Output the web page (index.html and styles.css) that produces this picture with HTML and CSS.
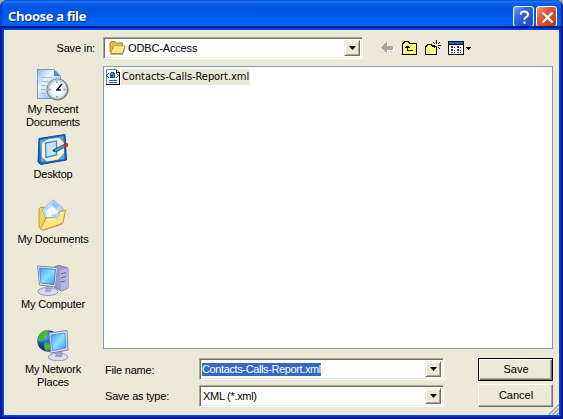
FILE: index.html
```html
<!DOCTYPE html>
<html lang="en">
<head>
<meta charset="utf-8">
<title>Choose a file</title>
<link rel="stylesheet" href="styles.css">
</head>
<body>
<div class="window">
  <header class="titlebar">
    <h1 class="title">Choose a file</h1>
    <button class="cap help" aria-label="Help"><svg width="21" height="21" viewBox="0 0 21 21"><path d="M6.8 7.8V6.6Q7.2 4.6 10.4 4.6Q14 4.6 14 7.4Q14 9 12.2 10Q10.5 11 10.5 12.8M10.5 14.6V16.8" fill="none" stroke="#fff" stroke-width="2"/></svg></button>
    <button class="cap close" aria-label="Close"><svg width="21" height="21" viewBox="0 0 21 21"><path d="M5.5 5.5L15.5 15.5M15.5 5.5L5.5 15.5" stroke="#fff" stroke-width="2.2"/></svg></button>
  </header>
  <main class="body">
    <div class="lookin">
      <span class="lookin-label">Save in:</span>
      <div class="combo">
        <svg class="folder" width="17" height="16" viewBox="0 0 17 16"><path d="M1 12V3L2.5 1.5H6L7.5 3H13.5V6" fill="#e8bd43" stroke="#ad8118"/><path d="M1.500 13.500L4.500 6H16L13.500 13.500Z" fill="#fbe58c" stroke="#b98d22"/><path d="M5 7H15" stroke="#fff8c8"/><path d="M2 14.500H13.500L16 8" stroke="#8b6f2e" fill="none" stroke-width=".6"/></svg>
        <span class="combo-text folder-name">ODBC-Access</span>
        <span class="drop"><svg width="7" height="4"><path d="M0 0H7L3.500 4Z"/></svg></span>
      </div>
      <div class="tools">
        <svg width="14" height="14" viewBox="0 0 14 14" shape-rendering="crispEdges"><path d="M2 7.500L7 2.500V5.500H14V9.500H7V12.500Z" fill="#fff"/><path d="M0 6.500L5.500 1V4.500H12V8.500H5.500V12Z" fill="#aca899"/></svg>
        <svg width="16" height="14" viewBox="0 0 16 14" shape-rendering="crispEdges"><path d="M.5 13.500V2.500H1.500V1.500H2.500V.5H6.500V1.500H7.500V2.500H14.500V13.500Z" fill="#ffff72" stroke="#000"/><path d="M5.500 5V9.500H11M3 6.500H8M4 5.500H7" stroke="#000" fill="none"/></svg>
        <svg width="16" height="16" viewBox="0 0 16 16" shape-rendering="crispEdges"><path d="M.5 14.500V6.500H1.500V5.500H2.500V4.500H6.500V5.500H7.500V6.500H11.500V14.500Z" fill="#ffff72" stroke="#000"/><path d="M11 0h1v4h-1zM11 7h1v3h-1zM7 5h3v1H7zM13 5h3v1h-3zM8 2h1v1H8zM9 3h1v1H9zM14 2h1v1h-1zM13 3h1v1h-1zM13 7h1v1h-1zM14 8h1v1h-1zM9 7h1v1H9z"/><path d="M11 5h1v1h-1z" fill="#fff"/></svg>
        <svg width="24" height="14" viewBox="0 0 24 14" shape-rendering="crispEdges"><path d="M.5.5H15.500V13.500H.5Z" fill="#fff" stroke="#000"/><path d="M1 1H15V3H1Z" fill="#1d62c8"/><path d="M0 3H16V4H0Z"/><path d="M3 5h2v2H3zM9 5h2v2H9zM3 8h2v2H3zM9 8h2v2H9zM3 11h2v1H3zM9 11h2v1H9z" fill="#2c319c"/><path d="M6 6h1v1H6zM12 6h1v1h-1zM6 9h1v1H6zM12 9h1v1h-1zM6 11h1v1H6zM12 11h1v1h-1z"/><path d="M18 6H23V7H22V8H21V9H20V8H19V7H18Z"/></svg>
      </div>
    </div>

    <nav class="places">
      <a class="place">
        <svg width="32" height="32" viewBox="0 0 32 32"><defs><linearGradient id="pg" x2="1" y2="1"><stop stop-color="#8db4ee"/><stop offset=".35" stop-color="#edf5ff"/><stop offset="1" stop-color="#72a0e5"/></linearGradient><radialGradient id="cl"><stop offset=".4" stop-color="#fff"/><stop offset="1" stop-color="#c7e5f4"/></radialGradient></defs><path d="M.5.5H17L23.500 7V29.500H.5Z" fill="url(#pg)" stroke="#7698d4"/><path d="M17 .5V7H23.500Z" fill="#5286d8"/><path d="M4 8.500H15M4 12.500H12M4 16.500H9M4 20.500H8M4 24.500H9" stroke="#9ab9e8"/><circle cx="20.500" cy="20.500" r="10" fill="url(#cl)" stroke="#7d8691" stroke-width="2.200"/><circle cx="20.200" cy="20.200" r="9.300" fill="none" stroke="#cbd1d8" stroke-width="1.200"/><path d="M20 12.500V14M20 27V28.500M12 20.500H14M26.500 20.500H28.500" stroke="#e97435" stroke-width="1.600"/><path d="M19 21H24M20 21L25 15" stroke="#172335" stroke-width="1.700"/></svg>
        <span>My Recent<br>Documents</span>
      </a>
      <a class="place">
        <svg width="32" height="32" viewBox="0 0 32 32"><path d="M2 4.500L28 .5L29.500 26L3.500 30.500L1 28Z" fill="#2166bd" stroke="#114b98"/><path d="M3 6L26.500 2L27.500 25L4 28Z" fill="#5da1e5"/><path d="M5 9L12 5L22 4L27 9V19L21 25.500L10 27.500L5 23Z" fill="#fff1c2"/><path d="M8.500 9L19.500 7V21L9 23.500Z" fill="#c6e6ff" stroke="#3d8ae0" stroke-width="1.400"/><path d="M16 16L27 10.500L29 12.500L19 18Z" fill="#4b9ae0" stroke="#104785" stroke-width=".8"/><circle cx="29" cy="11" r="2.200" fill="#c62d23"/><path d="M15 17L18 15.500L18 18Z" fill="#263b54"/></svg>
        <span>Desktop</span>
      </a>
      <a class="place docs">
        <svg width="32" height="32" viewBox="0 0 32 32"><path d="M2 28V10L4 8L9 9L12 14L25 15V25L7 31Z" fill="#f4d05c" stroke="#c6972b"/><path d="M5 11L16 .8L26 9L24 24L11 24Z" fill="#b7dcff" stroke="#87b8e7"/><path d="M14 5L17 2.500L22 7L19 10Z" fill="#8fc4f8"/><path d="M9 12L15 7L23 14V21L11 23Z" fill="#f2f9ff"/><path d="M3.500 30L9 19L19 18L22 13L28.500 11L26 24L21 26L6 31Z" fill="#ffe884" stroke="#c5952b"/><path d="M10 21L20 19.500L23 15L26 14" stroke="#fffad0" fill="none"/><path d="M14 16L24 14L20 21Z" fill="#a4d3f5"/></svg>
        <span>My Documents</span>
      </a>
      <a class="place">
        <svg width="32" height="32" viewBox="0 0 32 32"><defs><linearGradient id="sc" x2="1" y2="1"><stop stop-color="#3b9cf5"/><stop offset=".5" stop-color="#8ce0ff"/><stop offset="1" stop-color="#369cf1"/></linearGradient></defs><path d="M17 3L22 1.500L31 4V24L25 27L17 23Z" fill="#9b9bcb" stroke="#7373a8"/><path d="M23 6L31 4V24L24 27Z" fill="#b4b4df"/><path d="M24 10L29 8.500M24 14L29 12.500M24 18L28 17" stroke="#62629f"/><ellipse cx="11" cy="27.500" rx="10" ry="4" fill="#dbdbef" stroke="#9393bc"/><path d="M9 20H16L14 28H8Z" fill="#a9a9ce"/><path d="M.5 2L20.500 3.500L18.500 23L2.500 21Z" fill="#dddded" stroke="#8a8ab5"/><path d="M2.500 4L18.500 5.500L17 20.500L4 19Z" fill="url(#sc)" stroke="#3467bc" stroke-width=".7"/></svg>
        <span>My Computer</span>
      </a>
      <a class="place">
        <svg width="32" height="32" viewBox="0 0 32 32"><defs><radialGradient id="gl" cx=".35" cy=".3"><stop stop-color="#7bbcf2"/><stop offset=".5" stop-color="#2269cd"/><stop offset="1" stop-color="#123a8a"/></radialGradient></defs><circle cx="11" cy="12" r="10.700" fill="url(#gl)"/><path d="M2 6Q6 0 12 1.500L11 5L7 7L8 10L4 13L1 12ZM12 3L17 4L17 8L12 9ZM8 13L14 15L13 21L9 22L7 18Z" fill="#44b82e"/><ellipse cx="21" cy="28" rx="9.800" ry="3.800" fill="#dedeee" stroke="#9696be"/><path d="M19 21H26L25 28H18Z" fill="#a1a1c6"/><path d="M12 4L30 1.500L31 21L14 24Z" fill="#e0e0ef" stroke="#8585b2"/><path d="M14 6L28 4L29 19L15.500 21.500Z" fill="url(#sc)" stroke="#367bc9" stroke-width=".7"/></svg>
        <span>My Network<br>Places</span>
      </a>
    </nav>

    <section class="pane">
      <div class="files">
        <div class="file">
          <svg width="16" height="16" viewBox="0 0 16 16" shape-rendering="crispEdges"><path d="M1.500.5H11.500L14.500 3.500V15.500H1.500Z" fill="#fff" stroke="#808080"/><path d="M14.500 3.500V15.500H1M11.500 1V3.500H15" fill="none" stroke="#000"/><path d="M3 4h1v1H3zM2 5h1v1H2zM1 6h1v1H1zM2 7h1v1H2zM3 8h1v1H3zM11 4h1v1h-1zM12 5h1v1h-1zM13 6h1v1h-1zM12 7h1v1h-1zM11 8h1v1h-1z" fill="#123fae"/><path d="M6 3h3v1h1v5H5V4h1z" fill="#174ca1"/><path d="M6 4h2v2H6zM8 6h1v2H8z" fill="#40c2b1"/><path d="M4 11.500H12M4 13.500H12" stroke="#235bb0"/></svg>
          <span class="file-name">Contacts-Calls-Report.xml</span>
        </div>
      </div>
      <form class="fields">
        <label>File name:</label>
        <div class="combo"><span class="combo-text selected">Contacts-Calls-Report.xml</span><span class="drop"><svg width="7" height="4"><path d="M0 0H7L3.500 4Z"/></svg></span></div>
        <button type="button" class="btn default">Save</button>
        <label>Save as type:</label>
        <div class="combo"><span class="combo-text type">XML (*.xml)</span><span class="drop"><svg width="7" height="4"><path d="M0 0H7L3.500 4Z"/></svg></span></div>
        <button type="button" class="btn">Cancel</button>
      </form>
    </section>
    <svg class="grip" width="12" height="12" viewBox="0 0 12 12"><path d="M0 12L12 0M4 12L12 4M8 12L12 8" stroke="#fff" stroke-width="1.300"/><path d="M1.500 12L12 1.500M5.500 12L12 5.500M9.500 12L12 9.500" stroke="#aca899" stroke-width="1.800"/></svg>
  </main>
</div>
</body>
</html>
```
FILE: styles.css
```css
* { box-sizing: border-box; }
body { margin: 0; background: #aaa89c; font: 11px/13px "Liberation Sans", Arial, sans-serif; color: #000; overflow: hidden; }
svg { display: block; flex: none; }
button { font: inherit; color: inherit; padding: 0; }

.window { width: 563px; height: 419px; border-radius: 7px 7px 0 0; background: #0831d9; overflow: hidden; display: flex; flex-direction: column; }
.titlebar {
  height: 30px; flex: none; display: flex; align-items: center; padding: 3px 6px 0 8px; gap: 2px;
  background: linear-gradient(#0a48cd 0, #1c78f6 1px, #0f66ec 3px, #0758e2 5px, #0054e3 11px, #0059ee 17px, #0066fe 23px, #0062f6 26px, #0045cd 28px, #0038ba 30px);
  box-shadow: inset 2px 0 1px #0344cb, inset -2px 0 1px #012da7;
}
.title { flex: 1; margin: 0; padding-bottom: 1px; font: bold 13px/18px "Open Sans", "Noto Sans", sans-serif; letter-spacing: -.33px; color: #fff; text-shadow: 1px 1px #0a246a; }
.cap { width: 21px; height: 21px; border: 1px solid #fff; border-radius: 3px; display: grid; place-items: center; overflow: hidden; }
.help { background: linear-gradient(135deg, #7ca4f5, #3468e2 35%, #2356d4 70%, #1c4dc0); }
.close { background: linear-gradient(135deg, #f2a48b, #e1563a 35%, #d64a20 70%, #b3300b); }

.body {
  position: relative; flex: 1; margin: 0 4px 4px; background: #ece9d8;
  display: grid; grid-template: 36px 1fr / 99px 450px;
  box-shadow: 0 0 0 1px #0047e3, 0 0 0 2px #0039cf, 0 0 0 4px #001a8f;
}
.lookin { grid-column: 1 / 3; display: flex; align-items: flex-start; padding-top: 7px; }
.lookin-label { width: 99px; padding: 5px 8px 0 0; text-align: right; letter-spacing: -.15px; }
.combo { height: 22px; display: flex; align-items: center; background: #fff; border: 1px solid; border-color: #aca899 #fff #fff #aca899; box-shadow: inset 1px 1px #716f64, inset -1px -1px #f1efe2; padding: 2px 2px 2px 3px; }
.lookin .combo { width: 260px; padding-left: 5px; }
.combo-text { line-height: 13px; white-space: nowrap; letter-spacing: -.38px; }
.folder-name { margin-left: 2px; letter-spacing: -.15px; }
.drop { width: 16px; height: 100%; margin-left: auto; display: grid; place-items: center; background: #ece9d8; border: 1px solid; border-color: #f1efe2 #716f64 #716f64 #f1efe2; box-shadow: inset 1px 1px #fff, inset -1px -1px #aca899; }
.tools { display: flex; align-items: center; gap: 7px; margin: 3px 0 0 18px; }

.places { display: flex; flex-direction: column; padding-top: 3px; }
.place { height: 65px; display: flex; flex-direction: column; align-items: center; gap: 2px; text-align: center; padding-right: 1px; letter-spacing: -.2px; }
.place svg { margin-left: -1px; }
.place span { white-space: nowrap; }

.pane { display: flex; flex-direction: column; }
.files { height: 283px; background: #fff; border: 1px solid #7f9db9; padding: 2px 0 2px 1px; }
.file { display: flex; align-items: center; }
.file-name { padding: 0 1px; line-height: 16px; background: #ece9d8; font-family: "DejaVu Sans Condensed", "DejaVu Sans", sans-serif; font-stretch: condensed; letter-spacing: -.06px; white-space: nowrap; }
.fields { display: grid; grid-template-columns: 96px 245px 34px 75px; grid-template-rows: 23px 23px; gap: 3px 0; padding-top: 9px; }
.fields label { padding: 6px 0 0 2px; letter-spacing: -.2px; }
.btn { grid-column: 4; background: #ece9d8; border: 1px solid; border-color: #fff #716f64 #716f64 #fff; box-shadow: inset -1px -1px #aca899; padding: 0 0 1px 1px; }
.btn.default { border-color: #000; box-shadow: inset 1px 1px #fff, inset -1px -1px #716f64, inset -2px -2px #aca899; }
.fields .combo { padding-left: 2px; }
.fields .combo:nth-of-type(2) { margin-top: 1px; }
.type { padding-left: 1px; letter-spacing: -.3px; }
.selected { background: #316ac5; color: #fff; }
.grip { position: absolute; right: 0; bottom: 0; }
```
